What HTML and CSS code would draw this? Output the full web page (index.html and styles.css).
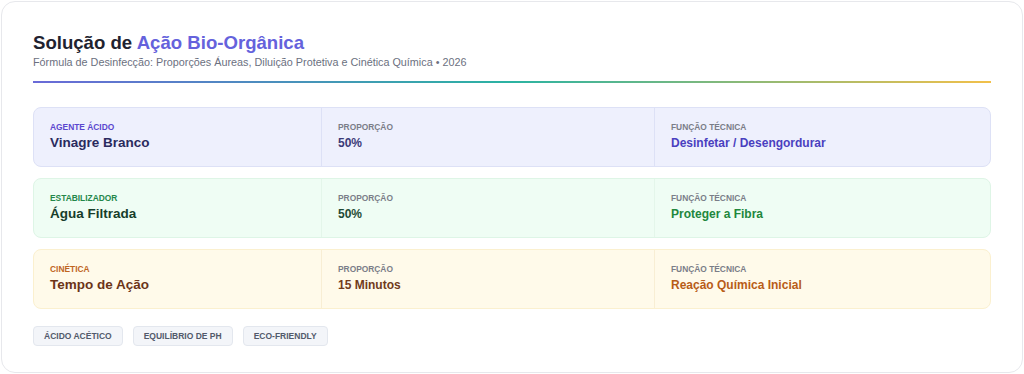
FILE: index.html
```html
<!DOCTYPE html>
<html lang="pt">
<head>
<meta charset="utf-8">
<link rel="stylesheet" href="styles.css">
</head>
<body>
<div class="card">
  <header class="head">
    <h1 class="title">Solução de <span class="accent">Ação Bio-Orgânica</span></h1>
    <p class="sub">Fórmula de Desinfecção: Proporções Áureas, Diluição Protetiva e Cinética Química • 2026</p>
  </header>
  <div class="rule"></div>
  <div class="rows">
    <div class="row indigo">
      <div class="cell"><div class="lbl">Agente Ácido</div><div class="val">Vinagre Branco</div></div>
      <div class="cell"><div class="lbl gray">Proporção</div><div class="val">50%</div></div>
      <div class="cell"><div class="lbl gray">Função Técnica</div><div class="val fn">Desinfetar / Desengordurar</div></div>
    </div>
    <div class="row green">
      <div class="cell"><div class="lbl">Estabilizador</div><div class="val">Água Filtrada</div></div>
      <div class="cell"><div class="lbl gray">Proporção</div><div class="val">50%</div></div>
      <div class="cell"><div class="lbl gray">Função Técnica</div><div class="val fn">Proteger a Fibra</div></div>
    </div>
    <div class="row amber">
      <div class="cell"><div class="lbl">Cinética</div><div class="val">Tempo de Ação</div></div>
      <div class="cell"><div class="lbl gray">Proporção</div><div class="val">15 Minutos</div></div>
      <div class="cell"><div class="lbl gray">Função Técnica</div><div class="val fn">Reação Química Inicial</div></div>
    </div>
  </div>
  <div class="tags">
    <span class="tag">Ácido Acético</span>
    <span class="tag">Equilíbrio de pH</span>
    <span class="tag">Eco-Friendly</span>
  </div>
</div>
</body>
</html>
```
FILE: styles.css
```css
* { box-sizing: border-box; }
html, body { margin: 0; padding: 0; background: #ffffff; }
body { font-family: "Liberation Sans", Arial, sans-serif; }
.card {
  width: 1022px;
  height: 372px;
  margin: 1px 0 0 1px;
  border: 1px solid #e7e8ec;
  border-radius: 14px;
  background: #fff;
  padding: 30px 31px 0 31px;
}
.head { margin: 0; }
.title {
  margin: 0;
  font-size: 18.6px;
  line-height: 22px;
  font-weight: 700;
  color: #1f2330;
}
.accent { color: #6562dc; }
.sub {
  margin: 1px 0 0;
  font-size: 10.8px;
  line-height: 14px;
  color: #6b7080;
}
.rule {
  margin-top: 12px;
  height: 2px;
  width: 958px;
  background: linear-gradient(90deg, #6a6ad8 0%, #2bb3a2 50%, #f2c04a 100%);
}
.rows {
  margin-top: 24px;
  width: 958px;
  display: flex;
  flex-direction: column;
  gap: 11px;
}
.row {
  display: grid;
  grid-template-columns: 288px 333px 1fr;
  height: 60px;
  border: 1px solid;
  border-radius: 8px;
}
.cell {
  padding: 14px 16px 0 16px;
  border-right: 1px solid;
}
.cell:last-child { border-right: none; }
.lbl {
  font-size: 8.4px;
  line-height: 11px;
  font-weight: 700;
  text-transform: uppercase;
}
.row .lbl.gray { color: #7a7d88; }
.val {
  margin-top: 2px;
  font-size: 12px;
  line-height: 16px;
  font-weight: 700;
}
.cell:first-child .val { font-size: 13.5px; }
.indigo { background: #eef0fd; border-color: #dde1f6; }
.indigo .cell { border-color: #dde1f6; }
.indigo .lbl { color: #5b47cf; }
.indigo .val { color: #2a2a5e; }
.indigo .cell:nth-child(2) .val { color: #3b3a78; }
.indigo .fn { color: #4a3fc0; }
.green { background: #effdf4; border-color: #def5e6; }
.green .cell { border-color: #e4f6ea; }
.green .lbl { color: #24874a; }
.green .val { color: #173d2b; }
.green .cell:nth-child(2) .val { color: #1f4a35; }
.green .fn { color: #21873d; }
.amber { background: #fffaea; border-color: #fbf0cf; }
.amber .cell { border-color: #f8eed4; }
.amber .lbl { color: #c0641e; }
.amber .val { color: #6b3418; }
.amber .cell:nth-child(2) .val { color: #713b1c; }
.amber .fn { color: #b85c17; }
.tags {
  margin-top: 17px;
  display: flex;
  gap: 10px;
}
.tag {
  display: inline-flex;
  align-items: center;
  height: 20px;
  padding: 0 10px;
  background: #f3f5f9;
  border: 1px solid #e3e7ee;
  border-radius: 4px;
  font-size: 8.5px;
  font-weight: 700;
  color: #525a6b;
  text-transform: uppercase;
}
```
